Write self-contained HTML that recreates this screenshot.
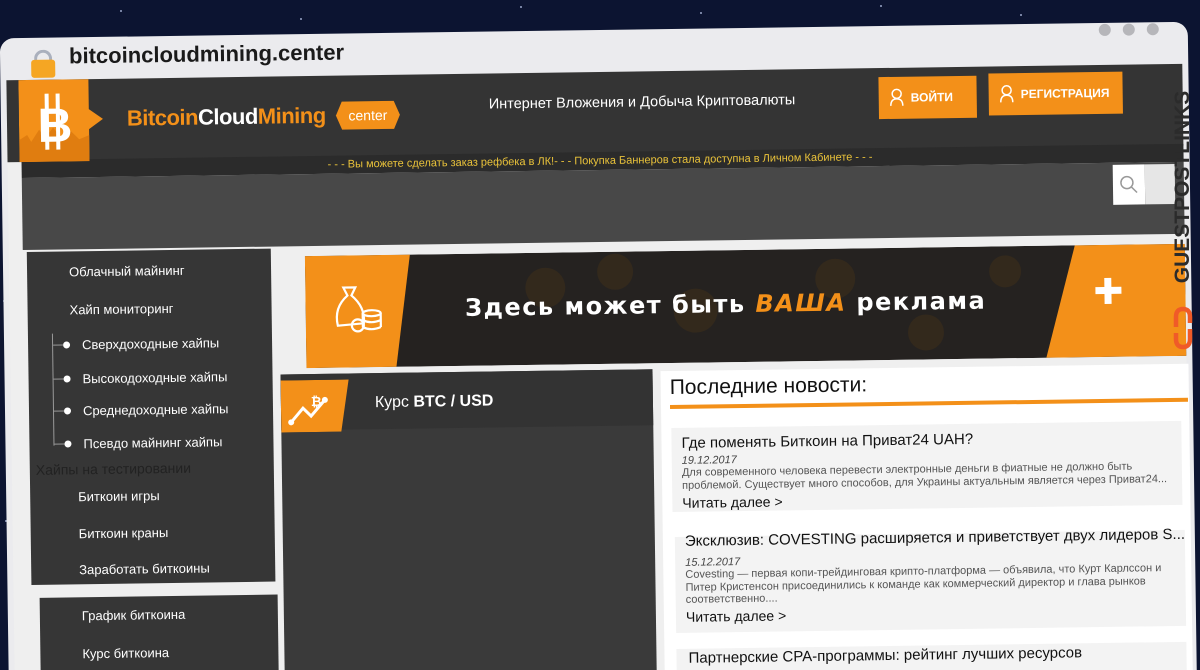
<!DOCTYPE html>
<html><head><meta charset="utf-8">
<style>
*{margin:0;padding:0;box-sizing:border-box}
html,body{width:1200px;height:670px;overflow:hidden}
body{background:#0c1431;font-family:"Liberation Sans","Noto Sans CJK SC",sans-serif;position:relative}
.star{position:absolute;width:2px;height:2px;background:#9aa6c8;border-radius:50%}
#win{position:absolute;left:0;top:0;width:1200px;height:670px;transform:rotate(-0.8deg);transform-origin:600px 335px}
.abs{position:absolute}
.frame{left:4px;top:30px;width:1188px;height:700px;background:#ebebee;border-radius:14px}
.content{left:10px;top:72px;width:1176px;height:660px;background:#efefef}
.menu a{position:absolute;color:#fff;font-size:13px;text-decoration:none;white-space:nowrap}
.news .t{position:absolute;font-size:15px;color:#111;white-space:nowrap}
.news .d{position:absolute;font-size:11px;font-style:italic;color:#444}
.news .b{position:absolute;font-size:11px;color:#555;line-height:12.5px}
.news .r{position:absolute;font-size:14px;color:#111}
</style></head><body>
<div class="star" style="left:120px;top:10px"></div><div class="star" style="left:300px;top:18px"></div><div class="star" style="left:520px;top:6px"></div><div class="star" style="left:700px;top:12px"></div><div class="star" style="left:880px;top:5px"></div><div class="star" style="left:1020px;top:14px"></div><div class="star" style="left:3px;top:300px"></div><div class="star" style="left:5px;top:520px"></div>
<div id="win">
 <div class="abs frame"></div>
 <!-- lock -->
 <div class="abs" style="left:38px;top:42px;width:18px;height:12px;border:3px solid #aab0bd;border-bottom:none;border-radius:9px 9px 0 0"></div>
 <div class="abs" style="left:35px;top:52px;width:24px;height:18px;background:#f5a623;border-radius:3px"></div>
 <div class="abs" style="left:73px;top:36px;font-size:22px;font-weight:bold;color:#1a1a1a;font-family:'Liberation Sans',sans-serif">bitcoincloudmining.center</div>
 <div class="abs" style="left:1103px;top:31px;width:12px;height:12px;border-radius:50%;background:#b6b6ba"></div>
 <div class="abs" style="left:1127px;top:31px;width:12px;height:12px;border-radius:50%;background:#b6b6ba"></div>
 <div class="abs" style="left:1151px;top:31px;width:12px;height:12px;border-radius:50%;background:#b6b6ba"></div>
 <div class="abs content"></div>
 <!-- header -->
 <div class="abs" style="left:10px;top:72px;width:1176px;height:82px;background:#343434"></div>
 <div class="abs" style="left:24px;top:152px;width:1162px;height:18px;background:#2b2b2b"></div>
 <div class="abs" style="left:24px;top:170px;width:1162px;height:72px;background:#484848"></div>
 <svg class="abs" style="left:22px;top:72px" width="90" height="82"><polygon points="0,0 70,0 70,30 84,40 70,50 70,82 0,82" fill="#f39019"/><path d="M0 82 L0 60 L8 55 L12 62 L20 50 L26 58 L34 48 L42 58 L52 52 L60 60 L70 56 L70 82Z" fill="#e07d10"/><text x="36" y="62" font-family="Liberation Sans" font-weight="bold" font-size="48" fill="#fff" text-anchor="middle">B</text><rect x="26" y="14" width="4" height="56" fill="#fff"/><rect x="37" y="14" width="4" height="56" fill="#fff"/></svg>
 <div class="abs" style="left:130px;top:99px;font-size:22px;font-weight:bold;letter-spacing:-0.5px"><span style="color:#f39019">Bitcoin</span><span style="color:#fff">Cloud</span><span style="color:#f39019">Mining</span></div>
 <svg class="abs" style="left:337px;top:96px" width="68" height="32"><polygon points="8,2 60,2 66,16 60,30 8,30 2,16" fill="#f39019"/><text x="34" y="21" font-family="Liberation Sans" font-size="14" fill="#fff" text-anchor="middle">center</text></svg>
 <div class="abs" style="left:492px;top:95px;font-size:14.5px;color:#fff">Интернет Вложения и Добыча Криптовалюты</div>
 <div class="abs" style="left:882px;top:81px;width:98px;height:42px;background:#f39019;color:#fff;font-size:12px;font-weight:bold;line-height:42px;padding-left:32px">ВОЙТИ</div>
 <div class="abs" style="left:992px;top:79px;width:134px;height:42px;background:#f39019;color:#fff;font-size:12px;font-weight:bold;line-height:42px;padding-left:32px">РЕГИСТРАЦИЯ</div>
 <svg class="abs" style="left:892px;top:92px" width="16" height="20"><circle cx="8" cy="6" r="4.5" fill="none" stroke="#fff" stroke-width="1.5"/><path d="M2 18 Q2 11 8 11 Q14 11 14 18" fill="none" stroke="#fff" stroke-width="1.5"/></svg>
 <svg class="abs" style="left:1002px;top:90px" width="16" height="20"><circle cx="8" cy="6" r="4.5" fill="none" stroke="#fff" stroke-width="1.5"/><path d="M2 18 Q2 11 8 11 Q14 11 14 18" fill="none" stroke="#fff" stroke-width="1.5"/></svg>
 <div class="abs" style="left:330px;top:155px;font-size:11px;color:#e9c23a;white-space:nowrap">- - - Вы можете сделать заказ рефбека в ЛК!- - - Покупка Баннеров стала доступна в Личном Кабинете - - -</div>
 <div class="abs" style="left:1115px;top:172px;width:32px;height:40px;background:#fff"></div>
 <div class="abs" style="left:1147px;top:172px;width:30px;height:40px;background:#e6e6e6"></div>
 <svg class="abs" style="left:1121px;top:182px" width="20" height="20"><circle cx="8" cy="8" r="6" fill="none" stroke="#999" stroke-width="1.5"/><line x1="12.5" y1="12.5" x2="18" y2="18" stroke="#999" stroke-width="1.5"/></svg>
 <!-- sidebar -->
 <div class="abs" style="left:28px;top:244px;width:244px;height:333px;background:#363636"></div>
 <div class="abs" style="left:36px;top:590px;width:238px;height:100px;background:#363636"></div>
 <div class="abs" style="left:52px;top:326px;width:1px;height:112px;background:#999"></div>
 <div class="menu">
  <a style="left:70px;top:257px">Облачный майнинг</a>
  <a style="left:70px;top:295px">Хайп мониторинг</a>
  <a style="left:82px;top:330px">Сверхдоходные хайпы</a>
  <a style="left:82px;top:364px">Высокодоходные хайпы</a>
  <a style="left:82px;top:396px">Среднедоходные хайпы</a>
  <a style="left:82px;top:429px">Псевдо майнинг хайпы</a>
  <a style="left:34px;top:454px;color:#222;font-size:14px">Хайпы на тестировании</a>
  <a style="left:76px;top:482px">Биткоин игры</a>
  <a style="left:76px;top:519px">Биткоин краны</a>
  <a style="left:76px;top:555px">Заработать биткоины</a>
  <a style="left:78px;top:601px">График биткоина</a>
  <a style="left:78px;top:639px">Курс биткоина</a>
 </div>
 <div class="abs" style="left:53px;top:337px;width:10px;height:1px;background:#999"></div><div class="abs" style="left:63px;top:334px;width:7px;height:7px;border-radius:50%;background:#fff"></div>
 <div class="abs" style="left:53px;top:371px;width:10px;height:1px;background:#999"></div><div class="abs" style="left:63px;top:368px;width:7px;height:7px;border-radius:50%;background:#fff"></div>
 <div class="abs" style="left:53px;top:403px;width:10px;height:1px;background:#999"></div><div class="abs" style="left:63px;top:400px;width:7px;height:7px;border-radius:50%;background:#fff"></div>
 <div class="abs" style="left:53px;top:436px;width:10px;height:1px;background:#999"></div><div class="abs" style="left:63px;top:433px;width:7px;height:7px;border-radius:50%;background:#fff"></div>
 <!-- banner -->
 <svg class="abs" style="left:306px;top:252px" width="880" height="112">
  <rect width="880" height="112" fill="#252220"/>
  <g fill="#33291c"><circle cx="240" cy="35" r="20"/><circle cx="310" cy="20" r="18"/><circle cx="390" cy="60" r="22"/><circle cx="530" cy="30" r="20"/><circle cx="620" cy="85" r="18"/><circle cx="780" cy="50" r="20"/><circle cx="700" cy="25" r="16"/></g>
  <polygon points="0,0 105,0 90,112 0,112" fill="#f39019"/>
  <polygon points="770,0 880,0 880,112 740,112" fill="#f39019"/>
  <g fill="none" stroke="#fff" stroke-width="2.2"><path d="M38 32 L50 32 L46 40 Q60 52 58 68 L32 70 Q28 52 42 40 Z"/><ellipse cx="66" cy="58" rx="9" ry="3"/><path d="M57 58 L57 72 M75 58 L75 72 M57 65 Q66 69 75 65 M57 72 Q66 76 75 72"/><circle cx="52" cy="70" r="6"/></g>
  <text x="420" y="62" font-family="DejaVu Sans" font-weight="bold" font-size="24" fill="#fff" letter-spacing="1.5" text-anchor="middle">Здесь может быть <tspan fill="#f39019" font-style="italic">ВАША</tspan> реклама</text>
  <rect x="790" y="42" width="26" height="7" fill="#fff"/><rect x="799" y="33" width="7" height="26" fill="#fff"/>
 </svg>
 <!-- BTC panel -->
 <div class="abs" style="left:280px;top:370px;width:372px;height:330px;background:#3a3a3a"></div>
 <div class="abs" style="left:280px;top:370px;width:372px;height:56px;background:#333"></div>
 <svg class="abs" style="left:280px;top:376px" width="70" height="52"><polygon points="0,0 68,0 60,52 0,52" fill="#f39019"/><path d="M10 42 L22 28 L30 36 L44 20" fill="none" stroke="#fff" stroke-width="3"/><circle cx="10" cy="42" r="3" fill="#fff"/><circle cx="44" cy="20" r="3" fill="#fff"/><text x="30" y="26" font-size="13" font-weight="bold" fill="#fff" font-family="Liberation Sans">₿</text></svg>
 <div class="abs" style="left:374px;top:391px;font-size:16px;color:#fff">Курс <b>BTC / USD</b></div>
 <!-- news -->
 <div class="abs news" style="left:660px;top:372px;width:528px;height:330px;background:#fff">
  <div class="abs" style="left:9px;top:5px;font-size:21px;color:#111">Последние новости:</div>
  <div class="abs" style="left:9px;top:34px;width:518px;height:4px;background:#f39019"></div>
  <div class="abs" style="left:10px;top:57px;width:510px;height:84px;background:#f3f3f3"></div>
  <div class="t" style="left:20px;top:64px">Где поменять Биткоин на Приват24 UAH?</div>
  <div class="d" style="left:20px;top:84px">19.12.2017</div>
  <div class="b" style="left:20px;top:96px;width:500px">Для современного человека перевести электронные деньги в фиатные не должно быть проблемой. Существует много способов, для Украины актуальным является через Приват24...</div>
  <div class="r" style="left:20px;top:124px">Читать далее &gt;</div>
  <div class="abs" style="left:12px;top:166px;width:510px;height:96px;background:#f3f3f3"></div>
  <div class="t" style="left:22px;top:162px">Эксклюзив: COVESTING расширяется и приветствует двух лидеров S...</div>
  <div class="d" style="left:22px;top:186px">15.12.2017</div>
  <div class="b" style="left:22px;top:198px;width:480px">Covesting — первая копи-трейдинговая крипто-платформа — объявила, что Курт Карлссон и Питер Кристенсон присоединились к команде как коммерческий директор и глава рынков соответственно....</div>
  <div class="r" style="left:22px;top:238px">Читать далее &gt;</div>
  <div class="abs" style="left:12px;top:278px;width:510px;height:60px;background:#f3f3f3"></div>
  <div class="t" style="left:24px;top:279px">Партнерские CPA-программы: рейтинг лучших ресурсов</div>
 </div>
</div>
<!-- watermark -->
<div class="abs" style="left:1183px;top:187px;transform:translate(-50%,-50%) rotate(-90deg);font-size:21px;font-weight:bold;color:#2b2b2b;white-space:nowrap;font-family:'Liberation Sans',sans-serif">GUESTPOSTLINKS</div>
<svg class="abs" style="left:1170px;top:305px" width="26" height="46"><g fill="none" stroke="#f05a28" stroke-width="4.5"><path d="M6 22 L6 12 Q6 4 13 4 Q20 4 20 12 L20 18"/><path d="M20 24 L20 34 Q20 42 13 42 Q6 42 6 34 L6 28"/></g></svg>
</body></html>
